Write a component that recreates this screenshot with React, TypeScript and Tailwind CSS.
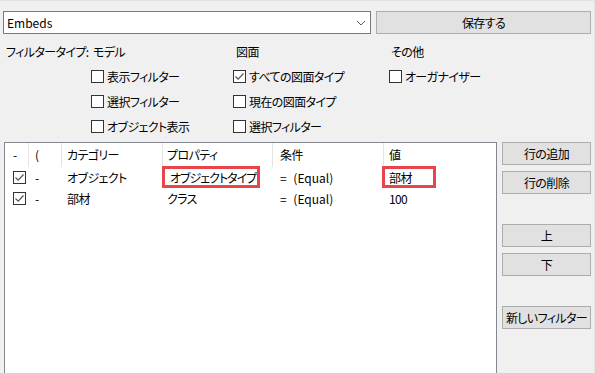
import React from "react";

const Check = ({ checked = false }: { checked?: boolean }) => (
  <span className="w-[13px] h-[13px] border border-[#333333] bg-white flex items-center justify-center shrink-0">
    {checked && (
      <svg width="11" height="11" viewBox="0 0 11 11">
        <path d="M1.5 5.5 L4.2 8.2 L9.5 2.5" fill="none" stroke="#555555" strokeWidth="1.2" />
      </svg>
    )}
  </span>
);

const CheckLabel = ({ label, checked = false }: { label: string; checked?: boolean }) => (
  <div className="flex items-center gap-[3px]">
    <Check checked={checked} />
    <span>{label}</span>
  </div>
);

const SideButton = ({ label }: { label: string }) => (
  <button className="h-[23px] w-full border border-[#adadad] bg-[#e1e1e1] flex items-center justify-center text-black whitespace-nowrap">
    {label}
  </button>
);

const rows = [
  { cat: "オブジェクト", prop: "オブジェクトタイプ", cond: "= (Equal)", value: "部材", mark: true },
  { cat: "部材", prop: "クラス", cond: "= (Equal)", value: "100", mark: false },
];

const App = () => {
  return (
    <div
      className="w-[595px] h-[373px] overflow-hidden bg-[#f0f0f0] border-t border-r border-[#e3e3e3] text-[12px] leading-none tracking-[-0.6px] text-black whitespace-nowrap [font-feature-settings:'palt']"
      style={{ fontFamily: '"Noto Sans CJK JP", "Noto Sans", sans-serif' }}
    >
      {/* 上段 */}
      <div className="flex gap-[5px] pt-[10px] pl-[3px]">
        <div className="w-[368px] h-[23px] border border-[#7a7a7a] bg-white flex items-center justify-between pl-[3px] pr-[4px]">
          <span className="tracking-normal">Embeds</span>
          <svg width="10" height="6" viewBox="0 0 10 6">
            <path d="M1 1 L5 5 L9 1" fill="none" stroke="#606060" strokeWidth="1" />
          </svg>
        </div>
        <button className="w-[215px] h-[23px] border border-[#adadad] bg-[#e1e1e1] flex items-center justify-center">
          保存する
        </button>
      </div>

      {/* フィルター */}
      <div className="mt-[5px] grid grid-cols-[91px_142px_156px_1fr] grid-rows-[25px_25px_25px_25px] items-center">
        <span className="pl-[6px]">フィルタータイプ:</span>
        <span className="pl-[2px]">モデル</span>
        <span className="pl-[3px]">図面</span>
        <span className="pl-[2px]">その他</span>

        <span />
        <CheckLabel label="表示フィルター" />
        <CheckLabel label="すべての図面タイプ" checked />
        <CheckLabel label="オーガナイザー" />

        <span />
        <CheckLabel label="選択フィルター" />
        <CheckLabel label="現在の図面タイプ" />
        <span />

        <span />
        <CheckLabel label="オブジェクト表示" />
        <CheckLabel label="選択フィルター" />
        <span />
      </div>

      {/* リスト */}
      <div className="mt-[3px] flex gap-[5px] pl-[4px]">
        <div className="w-[493px] h-[240px] border border-[#828790] bg-white">
          <div className="grid grid-cols-[23px_33px_101px_110px_111px_1fr] h-[24px] items-stretch">
            <span className="pl-[8px] flex items-center">-</span>
            <span className="pl-[6px] flex items-center border-l border-[#e5e5e5]">(</span>
            <span className="pl-[5px] flex items-center border-l border-[#e5e5e5]">カテゴリー</span>
            <span className="pl-[4px] flex items-center border-l border-[#e5e5e5]">プロパティ</span>
            <span className="pl-[7px] flex items-center border-l border-[#e5e5e5]">条件</span>
            <span className="pl-[5px] flex items-center border-l border-[#e5e5e5]">値</span>
          </div>
          {rows.map((row) => (
            <div key={row.cat} className="grid grid-cols-[23px_33px_101px_110px_111px_1fr] h-[21px] items-center">
              <span className="pl-[8px]">
                <Check checked />
              </span>
              <span className="pl-[7px]">-</span>
              <span className="pl-[6px]">{row.cat}</span>
              <span
                className={`relative h-full flex items-center ${
                  row.mark ? "pl-[8px] tracking-[-1px]" : "pl-[5px]"
                }`}
              >
                {row.prop}
                {row.mark && (
                  <span className="absolute left-0 top-[-1px] w-[98px] h-[22px] border-[3px] border-[#e8454b]" />
                )}
              </span>
              <span className="pl-[8px] tracking-normal [word-spacing:4px]">{row.cond}</span>
              <span className="relative h-full flex items-center pl-[6px]">
                {row.value}
                {row.mark && (
                  <span className="absolute left-[-1px] top-[-1px] w-[54px] h-[22px] border-[3px] border-[#e8454b]" />
                )}
              </span>
            </div>
          ))}
        </div>

        <div className="w-[89px] flex flex-col">
          <SideButton label="行の追加" />
          <div className="mt-[6px]">
            <SideButton label="行の削除" />
          </div>
          <div className="mt-[30px]">
            <SideButton label="上" />
          </div>
          <div className="mt-[6px]">
            <SideButton label="下" />
          </div>
          <div className="mt-[30px]">
            <SideButton label="新しいフィルター" />
          </div>
        </div>
      </div>
    </div>
  );
};

export default App;
